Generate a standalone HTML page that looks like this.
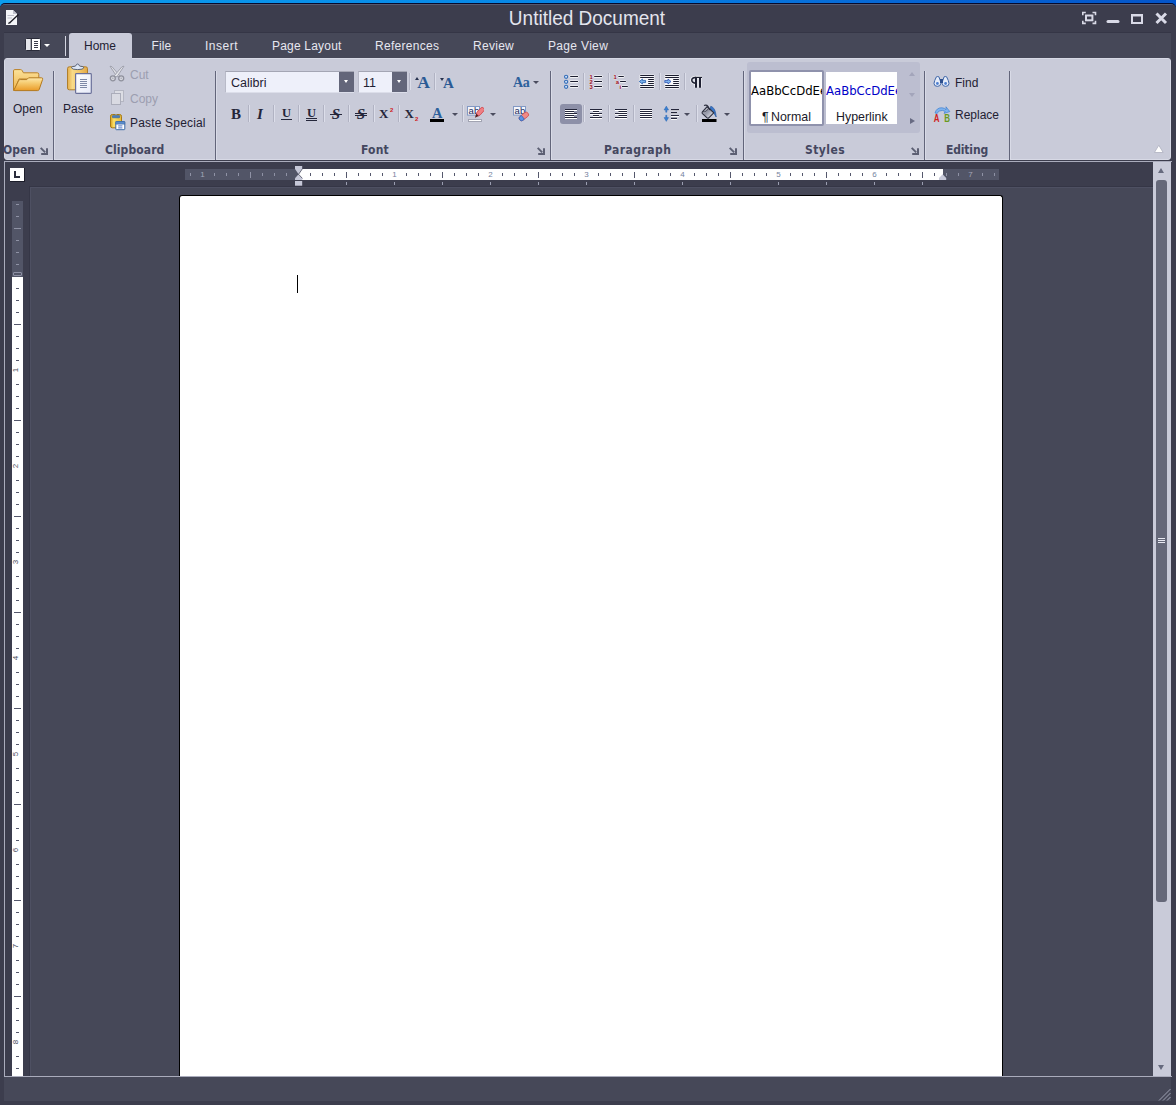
<!DOCTYPE html>
<html><head><meta charset="utf-8"><title>Untitled Document</title>
<style>
*{box-sizing:border-box;margin:0;padding:0}
html,body{width:1176px;height:1105px;overflow:hidden;background:#3c3d4d}
body{position:relative;font-family:"Liberation Sans",sans-serif;font-size:12px;color:#1f2133}
#app,#app div,#app svg,#app span.a{position:absolute}
#app{left:0;top:0;width:1176px;height:1105px;background:#3c3d4d;overflow:hidden}
.t{white-space:nowrap;line-height:14px;height:14px;margin-top:1px}
.tab{top:38px;color:#e6e7f0;font-size:12px}
.sep{top:71px;width:2px;height:89px;background:#62657a;border-right:1px solid #d9dbe7}
.bsep{width:2px;height:17px;background:#b1b3c3;border-right:1px solid #dcdeea}
.gl{top:142px;font-weight:bold;color:#444760;font-size:12px;font-family:"DejaVu Sans Condensed","DejaVu Sans","Liberation Sans",sans-serif}
.dd{width:0;height:0;border-left:3px solid transparent;border-right:3px solid transparent;border-top:3.3px solid #4a4c5e}
.ser{font-family:"Liberation Serif",serif;font-weight:bold;white-space:nowrap}
</style></head><body>
<div id="app">
<!--TITLE-->
<div style="left:0;top:0;width:1176px;height:8px;background:linear-gradient(90deg,#0b9eee 0%,#0785e6 50%,#0667d5 76%,#0455ca 100%)"></div>
<div style="left:0;top:3px;width:1176px;height:30px;background:#060b2c;border-radius:5px 5px 0 0"></div>
<div style="left:0;top:4px;width:1176px;height:28px;background:#555970;border-radius:5px 5px 0 0"></div>
<div style="left:0;top:5px;width:1176px;height:28px;background:#3c3d4d;border-radius:4px 4px 0 0"></div>
<div class="t" id="titletext" style="left:387px;top:6px;width:400px;height:24px;line-height:24px;text-align:center;font-size:19px;color:#e4e5ee;transform:scaleY(1.04);transform-origin:50% 50%">Untitled Document</div>
<!--TABS-->
<div style="left:4px;top:32px;width:1167px;height:1px;background:#353646"></div>
<div style="left:4px;top:33px;width:1167px;height:26px;background:#464858"></div>
<div style="left:65px;top:36px;width:1px;height:20px;background:#d3d5e0"></div>
<div class="t tab" style="left:151.5px;letter-spacing:.1px">File</div>
<div class="t tab" style="left:205px;letter-spacing:.5px">Insert</div>
<div class="t tab" style="left:272px;letter-spacing:.2px">Page Layout</div>
<div class="t tab" style="left:375px;letter-spacing:.3px">References</div>
<div class="t tab" style="left:473px;letter-spacing:.28px">Review</div>
<div class="t tab" style="left:548px;letter-spacing:.33px">Page View</div>
<!--RIBBON-->
<div id="ribbon" style="left:4px;top:58px;width:1167px;height:102px;background:#c9cbd9;border-radius:3px;border:1px solid #d7d9e5"></div>
<div style="left:69px;top:33px;width:63px;height:27px;background:#c9cbd9;border-radius:3px 3px 0 0"></div>
<div class="t tab" style="left:84px;color:#1f2133">Home</div>
<div class="sep" style="left:53px"></div>
<div class="sep" style="left:215px"></div>
<div class="sep" style="left:550px"></div>
<div class="sep" style="left:743px"></div>
<div class="sep" style="left:924px"></div>
<div class="sep" style="left:1009px"></div>
<div class="t" style="left:13px;top:101px">Open</div>
<div class="t" style="left:63px;top:101px">Paste</div>
<div class="t" style="left:130px;top:67px;color:#9c9eb0">Cut</div>
<div class="t" style="left:130px;top:91px;color:#9c9eb0">Copy</div>
<div class="t" style="left:130px;top:115px;letter-spacing:.18px">Paste Special</div>
<div class="t gl" style="left:3px">Open</div>
<div class="t gl" style="left:105px;letter-spacing:.1px">Clipboard</div>
<div class="t gl" style="left:361px;letter-spacing:.2px">Font</div>
<div class="t gl" style="left:604px;letter-spacing:.45px">Paragraph</div>
<div class="t gl" style="left:805px;letter-spacing:.43px">Styles</div>
<div class="t gl" style="left:946px;letter-spacing:-.15px">Editing</div>
<div class="t" style="left:955px;top:75px">Find</div>
<div class="t" style="left:955px;top:107px">Replace</div>
<!--OPEN / CLIPBOARD ICONS-->
<svg style="left:10px;top:64px" width="36" height="30" viewBox="0 0 36 30">
 <defs>
  <linearGradient id="fb" x1="0" y1="0" x2="0" y2="1"><stop offset="0" stop-color="#fbe29a"/><stop offset="1" stop-color="#efb34a"/></linearGradient>
  <linearGradient id="ff" x1="0" y1="0" x2="0" y2="1"><stop offset="0" stop-color="#fde9ac"/><stop offset=".4" stop-color="#f6cc72"/><stop offset="1" stop-color="#ea9b28"/></linearGradient>
 </defs>
 <path d="M3.5 6.8 Q3.5 5.6 4.8 5.6 H10.6 Q11.6 5.6 12.2 6.6 L13.4 8.8 H27.3 Q28.8 8.8 28.8 10.3 V15 H9 L4.5 26.5 H3.5 Z" fill="url(#fb)" stroke="#b98128" stroke-width="1"/>
 <path d="M8.6 16.6 Q9.1 15.6 10.2 15.6 H16.8 L18.6 13.8 H31.5 Q33.1 13.8 32.6 15.4 L29.2 25.5 Q28.8 26.6 27.6 26.6 H4.8 Q3.8 26.6 4.2 25.5 Z" fill="url(#ff)" stroke="#b47a1e" stroke-width="1"/>
</svg>
<svg style="left:64px;top:62px" width="30" height="33" viewBox="0 0 30 33">
 <defs>
  <linearGradient id="cb" x1="0" y1="0" x2="1" y2="0"><stop offset="0" stop-color="#e4ae4c"/><stop offset=".25" stop-color="#f8da88"/><stop offset=".6" stop-color="#f3c768"/><stop offset="1" stop-color="#e2a846"/></linearGradient>
  <linearGradient id="pp" x1="0" y1="0" x2="1" y2="1"><stop offset="0" stop-color="#ffffff"/><stop offset="1" stop-color="#e6eaf8"/></linearGradient>
 </defs>
 <rect x="3.5" y="4.8" width="20" height="23" rx="1.8" fill="url(#cb)" stroke="#b07f2c" stroke-width="1"/>
 <path d="M7.4 5.8 Q7.6 4.2 11 4.2 Q11.8 4.2 12.2 3 Q12.6 2 13.6 2 Q14.6 2 15 3 Q15.4 4.2 16.2 4.2 Q19.6 4.2 19.8 5.8 Q19.4 7.6 13.6 7.6 Q7.8 7.6 7.4 5.8 Z" fill="#dde7f7" stroke="#4d586e" stroke-width=".9"/>
 <rect x="11.6" y="11.7" width="15.7" height="19.6" rx=".8" fill="url(#pp)" stroke="#6a7099" stroke-width="1.2"/>
 <path d="M16 17.5 H23 M16 19.5 H23 M16 21.5 H23 M16 23.5 H23 M16 25.5 H23" stroke="#7d88a6" stroke-width="1"/>
</svg>
<!-- cut -->
<svg style="left:109px;top:65px" width="17" height="18" viewBox="0 0 17 18">
 <path d="M1 1.2 L2.9 1.6 L10.6 10.6 L9.2 12 L7.6 11.2 Z" fill="#dfe0e6" stroke="#9a9ca8" stroke-width=".9"/>
 <path d="M15 1.2 L13.1 1.6 L5.4 10.6 L6.8 12 L8.4 11.2 Z" fill="#e3e4e9" stroke="#9a9ca8" stroke-width=".9"/>
 <circle cx="3.8" cy="13.3" r="2.5" fill="#d6d7de" stroke="#8f919d" stroke-width="1.3"/>
 <circle cx="12.2" cy="13.3" r="2.5" fill="#d6d7de" stroke="#8f919d" stroke-width="1.3"/>
 <circle cx="3.8" cy="13.3" r=".8" fill="#a9abb6"/><circle cx="12.2" cy="13.3" r=".8" fill="#a9abb6"/>
</svg>
<!-- copy -->
<svg style="left:110px;top:89px" width="16" height="17" viewBox="0 0 16 17">
 <rect x="4.5" y="1.5" width="9" height="11" fill="#dcdde4" stroke="#b4b6c2" stroke-width="1"/>
 <rect x="1.5" y="4.5" width="9" height="11" fill="#d9dae2" stroke="#abadba" stroke-width="1"/>
</svg>
<!-- paste special -->
<svg style="left:109px;top:113px" width="17" height="18" viewBox="0 0 17 18">
 <defs><linearGradient id="ps" x1="0" y1="0" x2="1" y2="0"><stop offset="0" stop-color="#d9a21c"/><stop offset=".3" stop-color="#fbe06a"/><stop offset="1" stop-color="#e6b93a"/></linearGradient></defs>
 <rect x="1.5" y="1.5" width="11" height="13.3" rx="1.8" fill="url(#ps)" stroke="#a87a14" stroke-width="1"/>
 <path d="M6 1.9 Q7 0.4 8 1.9 Z" fill="#9fc0ea"/>
 <rect x="3.3" y="2.4" width="7.4" height="2.4" rx=".8" fill="#4a7dc0" stroke="#2f5f9c" stroke-width=".6"/>
 <rect x="6.8" y="8.7" width="9" height="8" rx=".6" fill="#fff" stroke="#3c6aa6" stroke-width="1"/>
 <rect x="6.8" y="8.7" width="9" height="2.4" fill="#5b8ccc" stroke="#3c6aa6" stroke-width=".6"/>
 <rect x="9.2" y="12.4" width="4.2" height="1" fill="#4f74c4"/><rect x="9.2" y="14.4" width="4.2" height="1" fill="#4f74c4"/>
</svg>
<!-- launcher open -->
<svg style="left:40px;top:147px" width="8" height="8" viewBox="0 0 8 8"><path d="M0.7 0.9 L5.2 5.4" fill="none" stroke="#5c5f73" stroke-width="2"/><path d="M1.2 7 H7 V1.2" fill="none" stroke="#5c5f73" stroke-width="2"/></svg>
<!--FONT GROUP-->
<div style="left:225px;top:71px;width:129px;height:22px;background:#eef0fa;border-top:1px solid #a4a6b4;border-left:1px solid #b8bac8;border-bottom:1px solid #dcdeea"></div>
<div style="left:339px;top:72px;width:15px;height:20px;background:#63667a"></div>
<div style="left:344px;top:80px;border-left:2.8px solid transparent;border-right:2.8px solid transparent;border-top:3.8px solid #fff;width:0;height:0"></div>
<div class="t" style="left:231px;top:75px;font-size:12.5px">Calibri</div>
<div style="left:358px;top:71px;width:49px;height:22px;background:#eef0fa;border-top:1px solid #a4a6b4;border-left:1px solid #b8bac8;border-bottom:1px solid #dcdeea"></div>
<div style="left:392px;top:72px;width:15px;height:20px;background:#63667a"></div>
<div style="left:396.8px;top:80px;border-left:2.8px solid transparent;border-right:2.8px solid transparent;border-top:3.8px solid #fff;width:0;height:0"></div>
<div class="t" style="left:363px;top:75px;font-size:12.5px">11</div>
<div class="bsep" style="left:409px;top:73px"></div>
<div class="bsep" style="left:434px;top:73px"></div>
<!-- grow / shrink -->
<div class="ser" style="left:417.3px;top:71px;font-size:17.6px;line-height:22px;color:#2a5a94">A</div>
<div style="left:414.5px;top:76.5px;width:0;height:0;border-left:2.5px solid transparent;border-right:2.5px solid transparent;border-bottom:3px solid #27324f"></div>
<div class="ser" style="left:443px;top:73px;font-size:15px;line-height:20px;color:#2a5a94">A</div>
<div style="left:439.5px;top:78px;width:0;height:0;border-left:2.5px solid transparent;border-right:2.5px solid transparent;border-top:3px solid #27324f"></div>
<div class="ser" style="left:513px;top:74px;font-size:14px;line-height:18px;color:#2c609c;letter-spacing:-0.3px">Aa</div>
<div class="dd" style="left:533px;top:81px"></div>
<!-- row 2 -->
<div class="ser" style="left:231px;top:104px;font-size:15px;line-height:20px;color:#24263a">B</div>
<div class="bsep" style="left:248px;top:105px"></div>
<div class="ser" style="left:257px;top:104px;font-size:15px;line-height:20px;color:#24263a;font-style:italic">I</div>
<div class="bsep" style="left:273px;top:105px"></div>
<div class="ser" style="left:280px;top:103px;font-size:12.5px;line-height:20px;color:#24263a;width:13px;text-align:center">U</div>
<div style="left:281px;top:119px;width:11px;height:1px;background:#24263a"></div>
<div class="bsep" style="left:298px;top:105px"></div>
<div class="ser" style="left:305px;top:103px;font-size:12.5px;line-height:20px;color:#24263a;width:13px;text-align:center">U</div>
<div style="left:306px;top:118px;width:11px;height:3px;border-top:1px solid #24263a;border-bottom:1px solid #24263a"></div>
<div class="bsep" style="left:323px;top:105px"></div>
<div class="ser" style="left:331px;top:103.5px;font-size:15px;line-height:20px;color:#24263a;font-style:italic;width:10px;text-align:center">S</div>
<div style="left:330px;top:114px;width:12px;height:1px;background:#24263a"></div>
<div class="bsep" style="left:348px;top:105px"></div>
<div class="ser" style="left:356px;top:103.5px;font-size:15px;line-height:20px;color:#24263a;font-style:italic;width:10px;text-align:center">S</div>
<div style="left:355px;top:113px;width:12px;height:3px;border-top:1px solid #24263a;border-bottom:1px solid #24263a"></div>
<div class="bsep" style="left:373px;top:105px"></div>
<div class="ser" style="left:379px;top:104px;font-size:13px;line-height:20px;color:#24263a">X</div>
<div class="t" style="left:390px;top:105px;font-size:6px;line-height:8px;height:8px;color:#d01818;font-weight:bold">2</div>
<div class="bsep" style="left:398px;top:105px"></div>
<div class="ser" style="left:404.5px;top:104px;font-size:13px;line-height:20px;color:#24263a">X</div>
<div class="t" style="left:415px;top:114px;font-size:6px;line-height:8px;height:8px;color:#d01818;font-weight:bold">2</div>
<div class="ser" style="left:432px;top:103px;font-size:14.5px;line-height:20px;color:#2c609c">A</div>
<div style="left:430px;top:119px;width:14px;height:3px;background:#000"></div>
<div class="dd" style="left:452px;top:113px"></div>
<div class="bsep" style="left:462px;top:105px"></div>
<!-- highlight -->
<svg style="left:466px;top:105px" width="18" height="18" viewBox="0 0 18 18">
 <rect x="1.5" y="1.5" width="12" height="8.6" fill="#f4f6fc" stroke="#8399c4" stroke-width="1"/>
 <text x="2.6" y="8.9" font-family="Liberation Sans, sans-serif" font-size="9.5" fill="#1d2d5e">ab</text>
 <rect x="2.5" y="14.5" width="13" height="2" fill="#fff" stroke="#a2a4b2" stroke-width="1"/>
 <g transform="rotate(42 13 8)"><rect x="11" y="1.2" width="4.2" height="9.6" rx="2" fill="#ee7f84" stroke="#cf4a52" stroke-width=".8"/><path d="M11.4 10.4 L14.8 10.4 L13.1 14.2 Z" fill="#5a1c1c"/></g>
</svg>
<div class="dd" style="left:490px;top:113px"></div>
<!-- clear format -->
<svg style="left:512px;top:105px" width="19" height="18" viewBox="0 0 19 18">
 <rect x="1.5" y="1.5" width="12" height="8.6" fill="#f4f6fc" stroke="#8399c4" stroke-width="1"/>
 <text x="2.6" y="8.9" font-family="Liberation Sans, sans-serif" font-size="9.5" fill="#1d2d5e">ab</text>
 <g transform="rotate(-38 12 11.5)">
  <rect x="6.6" y="9" width="10.6" height="4.8" rx="2.2" fill="#f08a86" stroke="#d2524e" stroke-width=".8"/>
  <path d="M8.8 9 H10.6 V13.8 H8.8 Q6.6 13.8 6.6 11.4 Q6.6 9 8.8 9 Z" fill="#5d95e6" stroke="#2f68c0" stroke-width=".8"/>
 </g>
</svg>
<!-- launcher font -->
<svg class="lch" style="left:537px;top:147px" width="8" height="8" viewBox="0 0 8 8"><path d="M0.7 0.9 L5.2 5.4" fill="none" stroke="#5c5f73" stroke-width="2"/><path d="M1.2 7 H7 V1.2" fill="none" stroke="#5c5f73" stroke-width="2"/></svg>
<!--PARAGRAPH GROUP-->
<svg style="left:563px;top:73px" width="17" height="18" viewBox="0 0 17 18">
 <g fill="#fff" opacity=".75"><rect x="6.5" y="2.3" width="9.2" height="2.6" rx="1.3"/><rect x="6.5" y="7.3" width="9.2" height="2.6" rx="1.3"/><rect x="6.5" y="12.3" width="9.2" height="2.6" rx="1.3"/></g>
 <g fill="#cfe2f8" stroke="#356db8" stroke-width="1.1"><circle cx="3.1" cy="3.8" r="1.6"/><circle cx="3.1" cy="8.8" r="1.6"/><circle cx="3.1" cy="13.8" r="1.6"/></g>
 <path d="M7.2 3.5 H15 M7.2 8.5 H15 M7.2 13.5 H15" stroke="#1c1e30" stroke-width="1.15"/>
</svg>
<div class="bsep" style="left:583px;top:73px"></div>
<svg style="left:588px;top:73px" width="17" height="18" viewBox="0 0 17 18">
 <g fill="#fff" opacity=".75"><rect x="5.5" y="2.3" width="9.2" height="2.6" rx="1.3"/><rect x="5.5" y="7.3" width="9.2" height="2.6" rx="1.3"/><rect x="5.5" y="12.3" width="9.2" height="2.6" rx="1.3"/></g>
 <g font-family="Liberation Sans, sans-serif" font-weight="bold" font-size="5.8" fill="#8e0c1c" stroke="#ffe3e6" stroke-width=".5" paint-order="stroke"><text x="1.6" y="5.8">1</text><text x="1.6" y="10.8">2</text><text x="1.6" y="15.8">3</text></g>
 <path d="M6.2 3.5 H14 M6.2 8.5 H14 M6.2 13.5 H14" stroke="#1c1e30" stroke-width="1.15"/>
</svg>
<div class="bsep" style="left:608px;top:73px"></div>
<svg style="left:613px;top:73px" width="17" height="18" viewBox="0 0 17 18">
 <g fill="#fff" opacity=".75"><rect x="4.7" y="2.3" width="6.8" height="2.6" rx="1.3"/><rect x="6.5" y="7.3" width="6.8" height="2.6" rx="1.3"/><rect x="8.4" y="12.3" width="6.8" height="2.6" rx="1.3"/></g>
 <g font-family="Liberation Sans, sans-serif" font-weight="bold" font-size="5.8" fill="#8e0c1c" stroke="#ffe3e6" stroke-width=".5" paint-order="stroke"><text x="0.6" y="5.8">1</text><text x="2.8" y="11.2">a</text><text x="6.6" y="15.8">i</text></g>
 <path d="M5.4 3.5 H10.8 M7.1 8.5 H12.9 M9 13.5 H14.8" stroke="#1c1e30" stroke-width="1.15"/>
</svg>
<svg style="left:639px;top:74px" width="16" height="16" viewBox="0 0 16 16">
 <rect x="0.6" y="0.4" width="14.8" height="14.4" rx="1" fill="#fff" opacity=".85"/>
 <path d="M1.2 1.5 H14.9 M1.2 3.5 H14.9 M9.2 5.5 H14.9 M9.2 7.5 H14.9 M9.2 9.5 H14.9 M1.2 11.5 H14.9 M1.2 13.5 H14.9" stroke="#1c1e30" stroke-width="1"/>
 <path d="M0.4 7.5 L3.4 5 V6.4 H6.6 V8.6 H3.4 V10 Z" fill="#7db4ee" stroke="#1f5aa8" stroke-width=".8"/>
</svg>
<div class="bsep" style="left:659px;top:73px"></div>
<svg style="left:664px;top:74px" width="16" height="16" viewBox="0 0 16 16">
 <rect x="0.6" y="0.4" width="14.8" height="14.4" rx="1" fill="#fff" opacity=".85"/>
 <path d="M1.2 1.5 H14.9 M1.2 3.5 H14.9 M9.2 5.5 H14.9 M9.2 7.5 H14.9 M9.2 9.5 H14.9 M1.2 11.5 H14.9 M1.2 13.5 H14.9" stroke="#1c1e30" stroke-width="1"/>
 <path d="M7 7.5 L4 5 V6.4 H0.8 V8.6 H4 V10 Z" fill="#7db4ee" stroke="#2a4fb0" stroke-width=".8"/>
</svg>
<div class="bsep" style="left:684px;top:73px"></div>
<svg style="left:689px;top:75px" width="15" height="15" viewBox="0 0 15 15">
 <g fill="none" stroke="#fff" stroke-opacity=".7" stroke-width="3.4" stroke-linejoin="round"><path d="M7 2.6 C3.6 2.4 2.6 4 2.8 5.4 C3 7.2 4.6 8.2 7 8.2"/><path d="M7 2.4 V12.4 M11 2.4 V12.4 M6.4 2.4 H13"/></g>
 <path d="M7 2.6 C3.6 2.4 2.6 4 2.8 5.4 C3 7.2 4.6 8.2 7 8.2" fill="#dfe1ea" stroke="#1e2032" stroke-width="1.5"/>
 <path d="M7 2 V12.8 M11 2 V12.8" stroke="#1e2032" stroke-width="2"/>
 <path d="M6 2.4 H13" stroke="#1e2032" stroke-width="1.2"/>
</svg>
<!-- row 2 -->
<div style="left:560px;top:104px;width:22px;height:20px;background:#8d90a8;border-radius:3px"></div>
<svg style="left:564px;top:108px" width="14" height="11" viewBox="0 0 14 11">
 <rect x="0" y="0" width="14" height="11" fill="#fff" opacity=".0"/>
 <path d="M1 2.5 H13 M1 4.5 H10 M1 6.5 H13 M1 8.5 H10 M1 10.5 H13" stroke="#fff" stroke-width="1"/>
 <path d="M1 1.5 H13 M1 3.5 H10 M1 5.5 H13 M1 7.5 H10 M1 9.5 H13" stroke="#24263a" stroke-width="1"/>
</svg>
<div class="bsep" style="left:583px;top:105px"></div>
<svg style="left:589px;top:108px" width="14" height="11" viewBox="0 0 14 11">
 <path d="M1 2.5 H13 M4 4.5 H10 M1 6.5 H13 M4 8.5 H10 M1 10.5 H13" stroke="#fff" stroke-width="1"/>
 <path d="M1 1.5 H13 M4 3.5 H10 M1 5.5 H13 M4 7.5 H10 M1 9.5 H13" stroke="#24263a" stroke-width="1"/>
</svg>
<div class="bsep" style="left:608px;top:105px"></div>
<svg style="left:614px;top:108px" width="14" height="11" viewBox="0 0 14 11">
 <path d="M1 2.5 H13 M4.5 4.5 H13 M1 6.5 H13 M4.5 8.5 H13 M1 10.5 H13" stroke="#fff" stroke-width="1"/>
 <path d="M1 1.5 H13 M4.5 3.5 H13 M1 5.5 H13 M4.5 7.5 H13 M1 9.5 H13" stroke="#24263a" stroke-width="1"/>
</svg>
<div class="bsep" style="left:633px;top:105px"></div>
<svg style="left:639px;top:108px" width="14" height="11" viewBox="0 0 14 11">
 <path d="M1 2.5 H13 M1 4.5 H13 M1 6.5 H13 M1 8.5 H13 M1 10.5 H13" stroke="#fff" stroke-width="1"/>
 <path d="M1 1.5 H13 M1 3.5 H13 M1 5.5 H13 M1 7.5 H13 M1 9.5 H13" stroke="#24263a" stroke-width="1"/>
</svg>
<svg style="left:663px;top:105px" width="18" height="18" viewBox="0 0 18 18">
 <path d="M3.3 1.1 L5.6 5 H3.9 V7.2 H2.7 V5 H1 Z" fill="#3b7fd0" stroke="#245fae" stroke-width=".4"/>
 <path d="M3.3 16.4 L5.6 12.6 H3.9 V10.3 H2.7 V12.6 H1 Z" fill="#3b7fd0" stroke="#245fae" stroke-width=".4"/>
 <path d="M8 5.6 H16 M8 8.6 H14 M8 11.5 H16 M8 14.4 H14" stroke="#fff" stroke-width="1"/>
 <path d="M8 4.6 H16 M8 7.6 H14 M8 10.5 H16 M8 13.4 H14" stroke="#24263a" stroke-width="1.2"/>
</svg>
<div class="dd" style="left:684px;top:113px"></div>
<div class="bsep" style="left:696px;top:105px"></div>
<svg style="left:701px;top:104px" width="17" height="19" viewBox="0 0 17 19">
 <defs><linearGradient id="bk" x1="0" y1="0" x2="1" y2="1"><stop offset="0" stop-color="#f0f1f5"/><stop offset=".45" stop-color="#9497a6"/><stop offset=".75" stop-color="#c9cbd5"/><stop offset="1" stop-color="#eceef2"/></linearGradient></defs>
 <path d="M9.8 2.2 Q14.6 3.6 15.2 13 L13 9.4 Q11.6 6.4 8.8 4.8 Z" fill="#3b78c8" stroke="#1f4f96" stroke-width=".6"/>
 <path d="M6.2 2.6 L12.8 8.8 L7.8 13.8 Q6.8 14.6 5.8 13.7 L1.5 9.6 Q0.7 8.6 1.6 7.6 Z" fill="url(#bk)" stroke="#2c2e3e" stroke-width="1.1"/>
 <path d="M1.8 7.8 Q3.6 8.4 6.4 6.2 Q8.4 4.4 6.4 2.8" fill="none" stroke="#2c2e3e" stroke-width=".8"/>
 <path d="M3 1.6 Q5.4 0.4 7 2.4 L8.8 6" fill="none" stroke="#2c2e3e" stroke-width="1.1"/>
 <rect x="1" y="15" width="14.5" height="3" fill="#000"/>
</svg>
<div class="dd" style="left:724px;top:113px"></div>
<svg style="left:729px;top:147px" width="8" height="8" viewBox="0 0 8 8"><path d="M0.7 0.9 L5.2 5.4" fill="none" stroke="#5c5f73" stroke-width="2"/><path d="M1.2 7 H7 V1.2" fill="none" stroke="#5c5f73" stroke-width="2"/></svg>
<!--STYLES GROUP-->
<div style="left:747px;top:62px;width:173px;height:71px;background:#bcbed0;border-radius:3px"></div>
<div style="left:749px;top:70px;width:75px;height:56px;background:#fff;border:2px solid #8f92ac;border-radius:2px;overflow:hidden">
 <div class="t" style="left:0px;top:10px;font-family:'DejaVu Sans',sans-serif;font-size:11.7px;color:#000;line-height:16px;height:16px">AaBbCcDdEe</div>
 <div class="t" style="left:11px;top:37px;font-size:12.4px;line-height:14px;color:#1a1a2a">¶</div>
 <div class="t" style="left:20px;top:37px;font-size:12.4px;line-height:14px;color:#1a1a2a">Normal</div>
</div>
<div style="left:826px;top:72px;width:71px;height:52px;background:#fff;overflow:hidden">
 <div class="t" style="left:0px;top:10px;font-family:'DejaVu Sans',sans-serif;font-size:11.7px;color:#0000c8;line-height:16px;height:16px">AaBbCcDdEe</div>
 <div class="t" style="left:10px;top:37px;font-size:12.4px;line-height:14px;color:#1a1a2a">Hyperlink</div>
</div>
<div style="left:909px;top:72px;width:0;height:0;border-left:3.5px solid transparent;border-right:3.5px solid transparent;border-bottom:4.5px solid #a3a5bb"></div>
<div style="left:909px;top:93px;width:0;height:0;border-left:3.5px solid transparent;border-right:3.5px solid transparent;border-top:4.5px solid #a3a5bb"></div>
<div style="left:910px;top:118px;width:0;height:0;border-top:3.2px solid transparent;border-bottom:3.2px solid transparent;border-left:5px solid #676a82"></div>
<svg style="left:911px;top:147px" width="8" height="8" viewBox="0 0 8 8"><path d="M0.7 0.9 L5.2 5.4" fill="none" stroke="#5c5f73" stroke-width="2"/><path d="M1.2 7 H7 V1.2" fill="none" stroke="#5c5f73" stroke-width="2"/></svg>
<!--EDITING ICONS-->
<svg style="left:933px;top:75px" width="17" height="13" viewBox="0 0 17 13">
 <path d="M3.4 1.8 Q4.7 1.2 5.9 1.8 L7.6 6.5 L7.8 8.6 Q7.4 11.4 4.4 11.4 Q1 11.4 1 8.4 Q1.2 6 3.4 1.8 Z" fill="#e4ebf8" stroke="#3f66a8" stroke-width="1"/>
 <path d="M13.6 1.8 Q12.3 1.2 11.1 1.8 L9.4 6.5 L9.2 8.6 Q9.6 11.4 12.6 11.4 Q16 11.4 16 8.4 Q15.8 6 13.6 1.8 Z" fill="#e4ebf8" stroke="#3f66a8" stroke-width="1"/>
 <rect x="7" y="4" width="3" height="4" fill="#2d4f8e"/>
 <circle cx="4.4" cy="8.5" r="1.4" fill="#4e7fd0"/><circle cx="12.6" cy="8.5" r="1.4" fill="#4e7fd0"/>
</svg>
<svg style="left:933px;top:105px" width="18" height="18" viewBox="0 0 18 18">
 <path d="M2 8 Q3.5 2.5 9 2.8 Q12 3 13 4.8 L13 1.8 L16.8 6.6 L11 8.4 L12.2 6.4 Q9.5 4.6 6.5 6 Q4.5 7 4.2 8.4 Z" fill="#7fb3ee" stroke="#3f7fd0" stroke-width=".7"/>
 <text x="0.8" y="17.4" font-family="Liberation Sans, sans-serif" font-weight="bold" font-size="10" fill="#d02020" transform="scale(.8 1)">A</text>
 <text x="14.2" y="17.4" font-family="Liberation Sans, sans-serif" font-weight="bold" font-size="10" fill="#6a9a1e" transform="scale(.8 1)">B</text>
</svg>
<!-- collapse -->
<svg style="left:1153px;top:144px" width="12" height="10" viewBox="0 0 12 10"><path d="M5.8 1.2 L10.2 8.5 H1.4 Z" fill="#fff" stroke="#b3b5c4" stroke-width=".9" stroke-linejoin="round"/></svg>
<!--DOC-->
<div id="docframe" style="left:4px;top:161px;width:1168px;height:916px;background:#3c3d4d;border:1px solid #aaacbc;border-right:none"></div>
<div style="left:29px;top:186px;width:1124px;height:890px;background:#353646"></div>
<div id="docbg" style="left:30px;top:187px;width:1123px;height:889px;background:#464858;border-top:1px solid #4e5062;border-left:1px solid #4e5062"></div>
<div id="page" style="left:179px;top:195px;width:824px;height:881px;background:#fff;border:1px solid #000;border-bottom:none;border-radius:3px 3px 0 0"></div>
<div id="vscroll" style="left:1153px;top:162px;width:18px;height:914px;background:#c9cbd9"></div>
<div id="vthumb" style="left:1156px;top:180px;width:11px;height:722px;background:#656879;border-radius:3px"></div>
<div id="status" style="left:4px;top:1077px;width:1167px;height:24px;background:#464858"></div>
<!--RULERS-->
<div style="left:185px;top:169px;width:114px;height:11px;background:#525567"></div>
<div style="left:299px;top:169px;width:644px;height:11px;background:#fff"></div>
<div style="left:943px;top:169px;width:56px;height:11px;background:#525567"></div>
<div style="left:190px;top:173px;width:1px;height:3px;background:#8f92a5"></div>
<div class="t" style="left:196.6px;top:168px;width:12px;text-align:center;font-size:8px;line-height:12px;height:12px;color:#a3a6b8">1</div>
<div style="left:214px;top:173px;width:1px;height:3px;background:#8f92a5"></div>
<div style="left:226px;top:173px;width:1px;height:3px;background:#8f92a5"></div>
<div style="left:238px;top:173px;width:1px;height:3px;background:#8f92a5"></div>
<div style="left:250px;top:172px;width:1px;height:6px;background:#8f92a5"></div>
<div style="left:262px;top:173px;width:1px;height:3px;background:#8f92a5"></div>
<div style="left:274px;top:173px;width:1px;height:3px;background:#8f92a5"></div>
<div style="left:286px;top:173px;width:1px;height:3px;background:#8f92a5"></div>
<div style="left:310px;top:173px;width:1px;height:3px;background:#55586c"></div>
<div style="left:322px;top:173px;width:1px;height:3px;background:#55586c"></div>
<div style="left:334px;top:173px;width:1px;height:3px;background:#55586c"></div>
<div style="left:346px;top:172px;width:1px;height:6px;background:#55586c"></div>
<div style="left:358px;top:173px;width:1px;height:3px;background:#55586c"></div>
<div style="left:370px;top:173px;width:1px;height:3px;background:#55586c"></div>
<div style="left:382px;top:173px;width:1px;height:3px;background:#55586c"></div>
<div class="t" style="left:388.6px;top:168px;width:12px;text-align:center;font-size:8px;line-height:12px;height:12px;color:#7683a0">1</div>
<div style="left:406px;top:173px;width:1px;height:3px;background:#55586c"></div>
<div style="left:418px;top:173px;width:1px;height:3px;background:#55586c"></div>
<div style="left:430px;top:173px;width:1px;height:3px;background:#55586c"></div>
<div style="left:442px;top:172px;width:1px;height:6px;background:#55586c"></div>
<div style="left:454px;top:173px;width:1px;height:3px;background:#55586c"></div>
<div style="left:466px;top:173px;width:1px;height:3px;background:#55586c"></div>
<div style="left:478px;top:173px;width:1px;height:3px;background:#55586c"></div>
<div class="t" style="left:484.6px;top:168px;width:12px;text-align:center;font-size:8px;line-height:12px;height:12px;color:#7683a0">2</div>
<div style="left:502px;top:173px;width:1px;height:3px;background:#55586c"></div>
<div style="left:514px;top:173px;width:1px;height:3px;background:#55586c"></div>
<div style="left:526px;top:173px;width:1px;height:3px;background:#55586c"></div>
<div style="left:538px;top:172px;width:1px;height:6px;background:#55586c"></div>
<div style="left:550px;top:173px;width:1px;height:3px;background:#55586c"></div>
<div style="left:562px;top:173px;width:1px;height:3px;background:#55586c"></div>
<div style="left:574px;top:173px;width:1px;height:3px;background:#55586c"></div>
<div class="t" style="left:580.6px;top:168px;width:12px;text-align:center;font-size:8px;line-height:12px;height:12px;color:#7683a0">3</div>
<div style="left:598px;top:173px;width:1px;height:3px;background:#55586c"></div>
<div style="left:610px;top:173px;width:1px;height:3px;background:#55586c"></div>
<div style="left:622px;top:173px;width:1px;height:3px;background:#55586c"></div>
<div style="left:634px;top:172px;width:1px;height:6px;background:#55586c"></div>
<div style="left:646px;top:173px;width:1px;height:3px;background:#55586c"></div>
<div style="left:658px;top:173px;width:1px;height:3px;background:#55586c"></div>
<div style="left:670px;top:173px;width:1px;height:3px;background:#55586c"></div>
<div class="t" style="left:676.6px;top:168px;width:12px;text-align:center;font-size:8px;line-height:12px;height:12px;color:#7683a0">4</div>
<div style="left:694px;top:173px;width:1px;height:3px;background:#55586c"></div>
<div style="left:706px;top:173px;width:1px;height:3px;background:#55586c"></div>
<div style="left:718px;top:173px;width:1px;height:3px;background:#55586c"></div>
<div style="left:730px;top:172px;width:1px;height:6px;background:#55586c"></div>
<div style="left:742px;top:173px;width:1px;height:3px;background:#55586c"></div>
<div style="left:754px;top:173px;width:1px;height:3px;background:#55586c"></div>
<div style="left:766px;top:173px;width:1px;height:3px;background:#55586c"></div>
<div class="t" style="left:772.6px;top:168px;width:12px;text-align:center;font-size:8px;line-height:12px;height:12px;color:#7683a0">5</div>
<div style="left:790px;top:173px;width:1px;height:3px;background:#55586c"></div>
<div style="left:802px;top:173px;width:1px;height:3px;background:#55586c"></div>
<div style="left:814px;top:173px;width:1px;height:3px;background:#55586c"></div>
<div style="left:826px;top:172px;width:1px;height:6px;background:#55586c"></div>
<div style="left:838px;top:173px;width:1px;height:3px;background:#55586c"></div>
<div style="left:850px;top:173px;width:1px;height:3px;background:#55586c"></div>
<div style="left:862px;top:173px;width:1px;height:3px;background:#55586c"></div>
<div class="t" style="left:868.6px;top:168px;width:12px;text-align:center;font-size:8px;line-height:12px;height:12px;color:#7683a0">6</div>
<div style="left:886px;top:173px;width:1px;height:3px;background:#55586c"></div>
<div style="left:898px;top:173px;width:1px;height:3px;background:#55586c"></div>
<div style="left:910px;top:173px;width:1px;height:3px;background:#55586c"></div>
<div style="left:922px;top:172px;width:1px;height:6px;background:#55586c"></div>
<div style="left:934px;top:173px;width:1px;height:3px;background:#55586c"></div>
<div style="left:946px;top:173px;width:1px;height:3px;background:#8f92a5"></div>
<div style="left:958px;top:173px;width:1px;height:3px;background:#8f92a5"></div>
<div class="t" style="left:964.6px;top:168px;width:12px;text-align:center;font-size:8px;line-height:12px;height:12px;color:#a3a6b8">7</div>
<div style="left:982px;top:173px;width:1px;height:3px;background:#8f92a5"></div>
<div style="left:994px;top:173px;width:1px;height:3px;background:#8f92a5"></div>
<div style="left:346px;top:182px;width:1px;height:3px;background:#9a9db0"></div>
<div style="left:394px;top:182px;width:1px;height:3px;background:#9a9db0"></div>
<div style="left:442px;top:182px;width:1px;height:3px;background:#9a9db0"></div>
<div style="left:490px;top:182px;width:1px;height:3px;background:#9a9db0"></div>
<div style="left:538px;top:182px;width:1px;height:3px;background:#9a9db0"></div>
<div style="left:586px;top:182px;width:1px;height:3px;background:#9a9db0"></div>
<div style="left:634px;top:182px;width:1px;height:3px;background:#9a9db0"></div>
<div style="left:682px;top:182px;width:1px;height:3px;background:#9a9db0"></div>
<div style="left:730px;top:182px;width:1px;height:3px;background:#9a9db0"></div>
<div style="left:778px;top:182px;width:1px;height:3px;background:#9a9db0"></div>
<div style="left:826px;top:182px;width:1px;height:3px;background:#9a9db0"></div>
<div style="left:874px;top:182px;width:1px;height:3px;background:#9a9db0"></div>
<div style="left:922px;top:182px;width:1px;height:3px;background:#9a9db0"></div>
<svg style="left:293px;top:165px" width="12" height="22" viewBox="0 0 12 22"><path d="M2 1 H9.2 V4 L5.6 9.3 L2 4 Z" fill="#c6c8d8"/><path d="M5.6 9.3 L9.2 13.2 V15 H2 V13.2 Z" fill="#c6c8d8"/><path d="M9.4 3.8 L5.6 9.3 L9.4 13.4" fill="none" stroke="#4a4c5e" stroke-width=".8"/><rect x="2" y="16" width="7.2" height="4.7" fill="#c6c8d8"/></svg>
<svg style="left:937px;top:173px" width="12" height="8" viewBox="0 0 12 8"><path d="M5.6 1.2 L9.2 5 V7 H2 V5 Z" fill="#c6c8d8"/></svg>
<div style="left:10px;top:168px;width:15px;height:14px;background:#fff;border-right:1px solid #1c1d2a;border-bottom:1px solid #1c1d2a"></div>
<div style="left:14px;top:171px;width:2px;height:7px;background:#2a2c3c"></div><div style="left:14px;top:176px;width:6px;height:2px;background:#2a2c3c"></div>
<div style="left:12px;top:201px;width:11px;height:76px;background:#525567"></div>
<div style="left:12px;top:277px;width:11px;height:799px;background:#fff"></div>
<div style="left:16px;top:204px;width:3px;height:1px;background:#8f92a5"></div>
<div style="left:16px;top:216px;width:3px;height:1px;background:#8f92a5"></div>
<div style="left:14px;top:228px;width:7px;height:1px;background:#8f92a5"></div>
<div style="left:16px;top:240px;width:3px;height:1px;background:#8f92a5"></div>
<div style="left:16px;top:252px;width:3px;height:1px;background:#8f92a5"></div>
<div style="left:16px;top:264px;width:3px;height:1px;background:#8f92a5"></div>
<div style="left:13px;top:272px;width:9px;height:4px;border:1px solid #8e90a4;border-radius:1px"></div>
<div style="left:16px;top:288px;width:3px;height:1px;background:#55586c"></div>
<div style="left:16px;top:300px;width:3px;height:1px;background:#55586c"></div>
<div style="left:16px;top:312px;width:3px;height:1px;background:#55586c"></div>
<div style="left:14px;top:324px;width:7px;height:1px;background:#55586c"></div>
<div style="left:16px;top:336px;width:3px;height:1px;background:#55586c"></div>
<div style="left:16px;top:348px;width:3px;height:1px;background:#55586c"></div>
<div style="left:16px;top:360px;width:3px;height:1px;background:#55586c"></div>
<div class="t" style="left:10.2px;top:362.9px;width:12px;height:12px;line-height:12px;text-align:center;font-size:8px;color:#4a4d5c;transform:rotate(-90deg)">1</div>
<div style="left:16px;top:384px;width:3px;height:1px;background:#55586c"></div>
<div style="left:16px;top:396px;width:3px;height:1px;background:#55586c"></div>
<div style="left:16px;top:408px;width:3px;height:1px;background:#55586c"></div>
<div style="left:14px;top:420px;width:7px;height:1px;background:#55586c"></div>
<div style="left:16px;top:432px;width:3px;height:1px;background:#55586c"></div>
<div style="left:16px;top:444px;width:3px;height:1px;background:#55586c"></div>
<div style="left:16px;top:456px;width:3px;height:1px;background:#55586c"></div>
<div class="t" style="left:10.2px;top:458.9px;width:12px;height:12px;line-height:12px;text-align:center;font-size:8px;color:#4a4d5c;transform:rotate(-90deg)">2</div>
<div style="left:16px;top:480px;width:3px;height:1px;background:#55586c"></div>
<div style="left:16px;top:492px;width:3px;height:1px;background:#55586c"></div>
<div style="left:16px;top:504px;width:3px;height:1px;background:#55586c"></div>
<div style="left:14px;top:516px;width:7px;height:1px;background:#55586c"></div>
<div style="left:16px;top:528px;width:3px;height:1px;background:#55586c"></div>
<div style="left:16px;top:540px;width:3px;height:1px;background:#55586c"></div>
<div style="left:16px;top:552px;width:3px;height:1px;background:#55586c"></div>
<div class="t" style="left:10.2px;top:554.9px;width:12px;height:12px;line-height:12px;text-align:center;font-size:8px;color:#4a4d5c;transform:rotate(-90deg)">3</div>
<div style="left:16px;top:576px;width:3px;height:1px;background:#55586c"></div>
<div style="left:16px;top:588px;width:3px;height:1px;background:#55586c"></div>
<div style="left:16px;top:600px;width:3px;height:1px;background:#55586c"></div>
<div style="left:14px;top:612px;width:7px;height:1px;background:#55586c"></div>
<div style="left:16px;top:624px;width:3px;height:1px;background:#55586c"></div>
<div style="left:16px;top:636px;width:3px;height:1px;background:#55586c"></div>
<div style="left:16px;top:648px;width:3px;height:1px;background:#55586c"></div>
<div class="t" style="left:10.2px;top:650.9px;width:12px;height:12px;line-height:12px;text-align:center;font-size:8px;color:#4a4d5c;transform:rotate(-90deg)">4</div>
<div style="left:16px;top:672px;width:3px;height:1px;background:#55586c"></div>
<div style="left:16px;top:684px;width:3px;height:1px;background:#55586c"></div>
<div style="left:16px;top:696px;width:3px;height:1px;background:#55586c"></div>
<div style="left:14px;top:708px;width:7px;height:1px;background:#55586c"></div>
<div style="left:16px;top:720px;width:3px;height:1px;background:#55586c"></div>
<div style="left:16px;top:732px;width:3px;height:1px;background:#55586c"></div>
<div style="left:16px;top:744px;width:3px;height:1px;background:#55586c"></div>
<div class="t" style="left:10.2px;top:746.9px;width:12px;height:12px;line-height:12px;text-align:center;font-size:8px;color:#4a4d5c;transform:rotate(-90deg)">5</div>
<div style="left:16px;top:768px;width:3px;height:1px;background:#55586c"></div>
<div style="left:16px;top:780px;width:3px;height:1px;background:#55586c"></div>
<div style="left:16px;top:792px;width:3px;height:1px;background:#55586c"></div>
<div style="left:14px;top:804px;width:7px;height:1px;background:#55586c"></div>
<div style="left:16px;top:816px;width:3px;height:1px;background:#55586c"></div>
<div style="left:16px;top:828px;width:3px;height:1px;background:#55586c"></div>
<div style="left:16px;top:840px;width:3px;height:1px;background:#55586c"></div>
<div class="t" style="left:10.2px;top:842.9px;width:12px;height:12px;line-height:12px;text-align:center;font-size:8px;color:#4a4d5c;transform:rotate(-90deg)">6</div>
<div style="left:16px;top:864px;width:3px;height:1px;background:#55586c"></div>
<div style="left:16px;top:876px;width:3px;height:1px;background:#55586c"></div>
<div style="left:16px;top:888px;width:3px;height:1px;background:#55586c"></div>
<div style="left:14px;top:900px;width:7px;height:1px;background:#55586c"></div>
<div style="left:16px;top:912px;width:3px;height:1px;background:#55586c"></div>
<div style="left:16px;top:924px;width:3px;height:1px;background:#55586c"></div>
<div style="left:16px;top:936px;width:3px;height:1px;background:#55586c"></div>
<div class="t" style="left:10.2px;top:938.9px;width:12px;height:12px;line-height:12px;text-align:center;font-size:8px;color:#4a4d5c;transform:rotate(-90deg)">7</div>
<div style="left:16px;top:960px;width:3px;height:1px;background:#55586c"></div>
<div style="left:16px;top:972px;width:3px;height:1px;background:#55586c"></div>
<div style="left:16px;top:984px;width:3px;height:1px;background:#55586c"></div>
<div style="left:14px;top:996px;width:7px;height:1px;background:#55586c"></div>
<div style="left:16px;top:1008px;width:3px;height:1px;background:#55586c"></div>
<div style="left:16px;top:1020px;width:3px;height:1px;background:#55586c"></div>
<div style="left:16px;top:1032px;width:3px;height:1px;background:#55586c"></div>
<div class="t" style="left:10.2px;top:1034.9px;width:12px;height:12px;line-height:12px;text-align:center;font-size:8px;color:#4a4d5c;transform:rotate(-90deg)">8</div>
<div style="left:16px;top:1056px;width:3px;height:1px;background:#55586c"></div>
<div style="left:16px;top:1068px;width:3px;height:1px;background:#55586c"></div>
<div style="left:297px;top:275px;width:1px;height:18px;background:#000"></div>
<div style="left:1158px;top:168px;width:0;height:0;border-left:3.6px solid transparent;border-right:3.6px solid transparent;border-bottom:5px solid #666a7e"></div>
<div style="left:1158px;top:1065px;width:0;height:0;border-left:3.6px solid transparent;border-right:3.6px solid transparent;border-top:5px solid #666a7e"></div>
<div style="left:1158px;top:538px;width:7px;height:1px;background:#e8e9f2"></div><div style="left:1158px;top:540px;width:7px;height:1px;background:#e8e9f2"></div><div style="left:1158px;top:542px;width:7px;height:1px;background:#e8e9f2"></div>
<svg style="left:1156px;top:1086px" width="16" height="16" viewBox="0 0 16 16"><path d="M3 14.5 L14.5 3 M7 14.5 L14.5 7 M11 14.5 L14.5 11" stroke="#9fa2b4" stroke-width="1" fill="none"/></svg>
<svg style="left:5px;top:9px" width="15" height="17" viewBox="0 0 15 17"><path d="M1 1 H8 L12 5 V16 H1 Z" fill="#f4f5f8"/><path d="M8 1 V5 H12 Z" fill="#bfc1cc"/><path d="M2.5 6.5 H9 M2.5 9 H7" stroke="#aeb0bc" stroke-width=".8"/><path d="M13.5 5.5 L4.5 14" stroke="#1a1a22" stroke-width="1.3"/><path d="M3 15 L4 12.8 L5.4 14.2 Z" fill="#1a1a22"/></svg>
<svg style="left:25px;top:38px" width="16" height="13" viewBox="0 0 16 13"><rect x="0.5" y="0.5" width="15" height="12" rx="1.2" fill="#fff" stroke="#2a2c3a" stroke-width="1"/><rect x="1" y="1" width="5" height="11" fill="#e6e7ec"/><rect x="5.7" y="0.5" width="1.2" height="12" fill="#2a2c3a"/><path d="M9 3.5 H13 M9 5.5 H13 M9 7.5 H13 M9 9.5 H13" stroke="#3a3c4c" stroke-width="1"/></svg>
<div style="left:44px;top:44px;width:0;height:0;border-left:3px solid transparent;border-right:3px solid transparent;border-top:3px solid #fff"></div>
<svg style="left:1080px;top:10px" width="90" height="16" viewBox="0 0 90 16"><g fill="none" stroke="#d9dae7"><path d="M2.8 5.2 V2.5 H5.8 M12.5 2.5 H15.5 V5.2 M15.5 10.7 V13.4 H12.5 M5.8 13.4 H2.8 V10.7" stroke-width="1.6"/><rect x="6" y="5.5" width="6.4" height="4.8" stroke-width="2"/><path d="M28 11.5 H38" stroke-width="3" stroke-linecap="round"/><path d="M52 5.5 H62 V13 H52 Z M51 5 H63" stroke-width="2"/><path d="M76.5 3.5 L86 13 M86 3.5 L76.5 13" stroke-width="3"/></g></svg>

</div>
</body></html>
